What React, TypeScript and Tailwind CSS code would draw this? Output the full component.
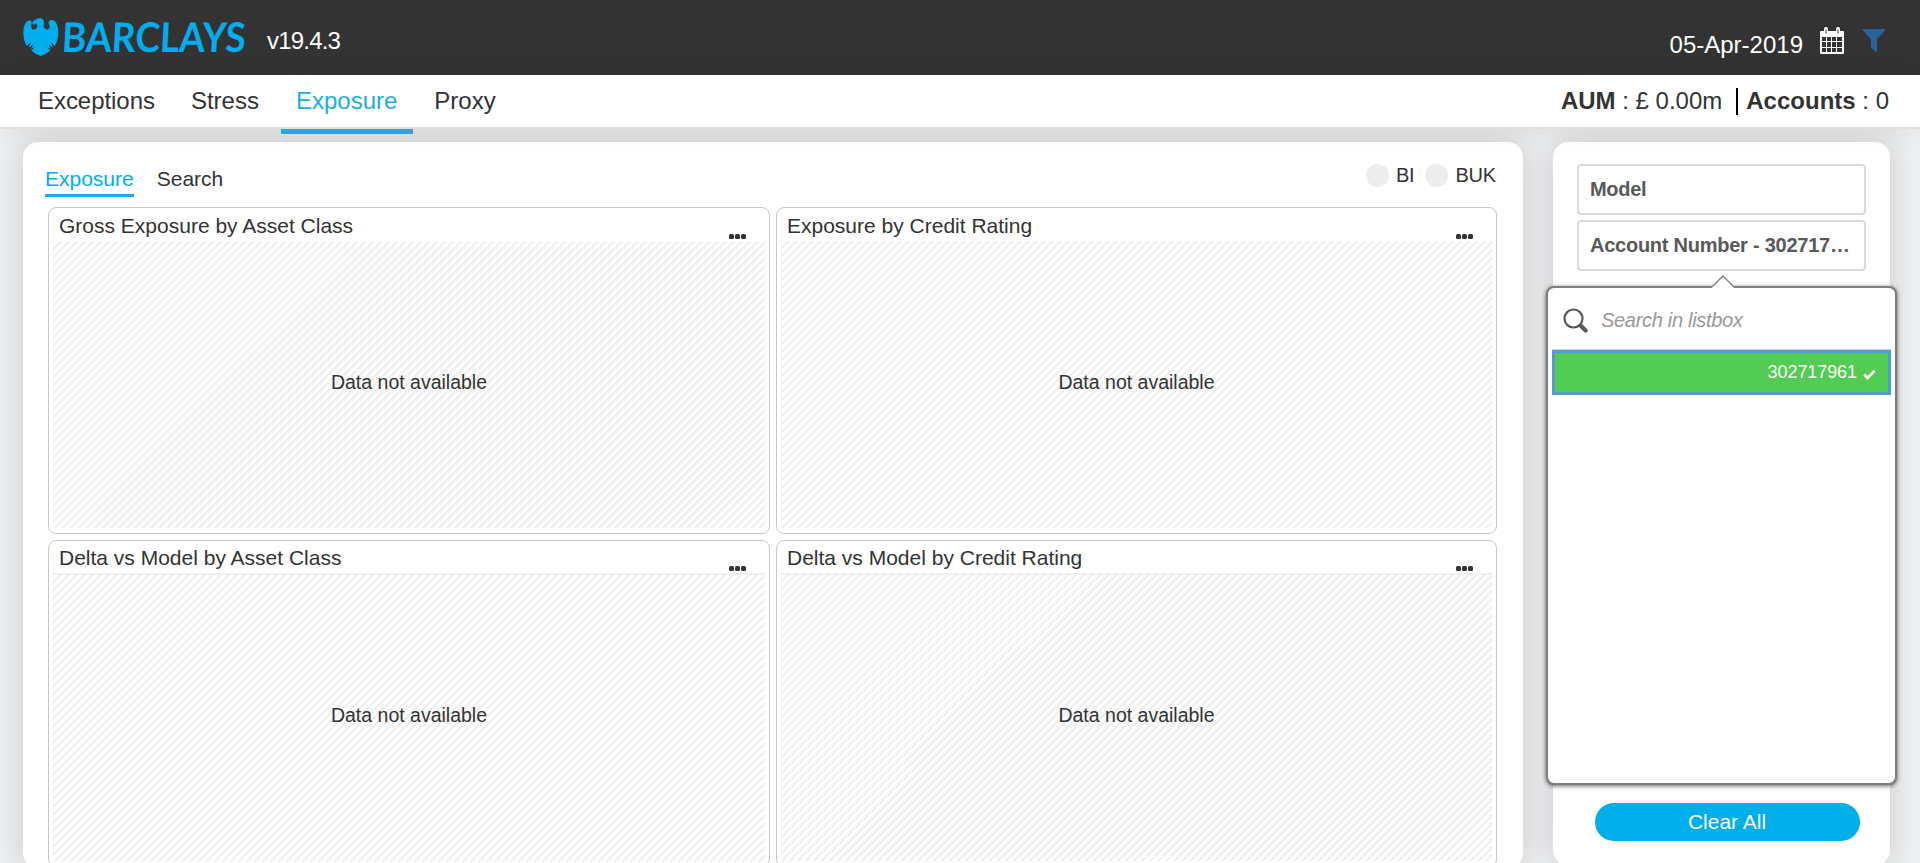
const hatch =
  "bg-[repeating-linear-gradient(-45deg,#fff_0px,#fff_2.500px,#f0f0f0_3.200px,#f0f0f0_5px,#fff_5.660px)]";

function Eagle() {
  return (
    <svg width="36" height="40" viewBox="0 0 36 40" fill="#00aeef" className="shrink-0">
      <path d="M9.500 5Q10.500 3 13 2.500Q14.500 1 17 1Q21 1.500 21 6Q20.300 8 20.800 10Q22 13 25 12.300Q27.500 11 26.300 8.500Q24.500 5 27 3.300Q31.500 2 34 7.500Q35.500 11 35.200 18Q34.500 25 31.500 29.300Q30 27 28 25Q28.500 27.500 30.200 30.500Q27.500 29.500 25.800 27.500Q26.500 30 28 32Q26 31.500 24.300 30Q25.500 32.500 27.300 33.500Q23.500 37 17.800 39Q12 37 8.300 33.500Q10.500 32 11.500 30Q9.500 31.500 7.500 32Q9.500 30 10 27.500Q8 29.500 5.500 30.500Q7.300 27.500 7.800 25Q5.500 27 4 29.300Q1 25 .400 18Q0 11 1.800 7.500Q4 3 7.500 3.500Q8.800 4 8.500 6.500Q7.500 11 9.500 12.300Q12.500 13.300 14 10.500Q15 8.500 13.500 6.800Q12 6 10.500 8Q9 7 9.500 5Z" />
    </svg>
  );
}

function Header() {
  return (
    <header className="flex h-[75px] shrink-0 items-start bg-[#333] pl-[23px] text-white">
      <div className="flex pt-[17px]">
        <Eagle />
        <svg width="190" height="50" viewBox="0 0 190 50" className="overflow-visible">
          <text x="4" y="34.500" textLength="184" lengthAdjust="spacingAndGlyphs" fill="#00aeef" fontFamily="Lato, sans-serif" fontWeight="700" fontSize="41" transform="skewX(-3)">BARCLAYS</text>
        </svg>
      </div>
      <span className="ml-[18px] mt-[23px] text-[24px] leading-[36px] tracking-[-0.800px]">v19.4.3</span>
      <span className="ml-auto mt-[27px] text-[24px] leading-[36px]">05-Apr-2019</span>
      <svg width="24" height="27" viewBox="0 0 24 27" className="ml-[17px] mt-[27px]">
        <path fill="#fff" d="M1 4H4V2a2 2 0 0 1 4 0v2h8V2a2 2 0 0 1 4 0v2h3Q24 4 24 5v21Q24 27 23 27H1Q0 27 0 26V5Q0 4 1 4Z" />
        <path fill="#333" d="M5.500 2.500h1v4h-1zM17.500 2.500h1v4h-1zM2 10h4v4H2zM7 10h4v4H7zM12 10h4v4h-4zM17 10h5v4h-5zM2 15h4v5H2zM7 15h4v5H7zM12 15h4v5h-4zM17 15h5v5h-5zM2 21h4v4H2zM7 21h4v4H7zM12 21h4v4h-4zM17 21h5v4h-5z" />
      </svg>
      <svg width="24" height="24" viewBox="0 0 24 24" className="ml-[18px] mr-[34px] mt-[29px]">
        <path fill="#286399" d="M.5 0h23Q24 1 15 10v13.500L9 19V10Q0 1 .5 0Z" />
      </svg>
    </header>
  );
}

function Nav() {
  return (
    <nav className="relative z-10 flex h-[52px] shrink-0 bg-white pl-[23px] pr-[31px] text-[24px] leading-[52px] shadow-[0_2px_0_#dfdfdf,0_4px_28px_rgba(0,0,0,0.08)]">
      <a className="px-[15px] tracking-[-0.050px]">Exceptions</a>
      <a className="ml-[6px] px-[15px]">Stress</a>
      <a className="ml-[7px] h-[59px] border-b-[5px] border-[#1caee2] pl-[15px] pr-[16px] text-[#1caee2]">Exposure</a>
      <a className="ml-[6px] px-[15px]">Proxy</a>
      <div className="ml-auto flex items-center">
        <span><b>AUM</b> : £ 0.00m</span>
        <span className="ml-[14px] mr-[8px] h-[27px] w-[2px] bg-black" />
        <span><b>Accounts</b> : 0</span>
      </div>
    </nav>
  );
}

function Card({ title, ruled }: { title: string; ruled?: boolean }) {
  return (
    <section className="flex h-[327px] flex-col rounded-[8px] border border-[#c8c8c8] px-[4px] pb-[5px]">
      <div className={`flex shrink-0 justify-between pl-[6px] ${ruled ? "h-[32px]" : "h-[33px]"}`}>
        <h2 className={`text-[21px] ${ruled ? "leading-[34px]" : "leading-[36px]"}`}>{title}</h2>
        <div className={`mr-[19px] flex gap-[1px] ${ruled ? "mt-[25px]" : "mt-[26px]"}`}>
          <i className="size-[5px] rounded-[1.500px] bg-[#333]" />
          <i className="size-[5px] rounded-[1.500px] bg-[#333]" />
          <i className="size-[5px] rounded-[1.500px] bg-[#333]" />
        </div>
      </div>
      <div className={`flex flex-1 items-center justify-center pb-[4px] text-[19.500px] ${hatch} ${ruled ? "border-t-2 border-[#f0f0f0]" : ""}`}>
        Data not available
      </div>
    </section>
  );
}

function Toggle({ label }: { label: string }) {
  return (
    <div className="flex items-center gap-[7px]">
      <i className="size-[23px] rounded-full bg-[#ededed]" />
      <span className="pb-[2px] text-[20px] leading-[22px] tracking-[-0.200px]">{label}</span>
    </div>
  );
}

function Exposure() {
  return (
    <main className="h-[726px] w-[1500px] shrink-0 rounded-[15px] bg-white pl-[22px] pr-[27px] shadow-[0_0_30px_rgba(0,0,0,0.16)]">
      <div className="flex h-[65px] text-[21px]">
        <a className="mt-[23px] h-[32px] border-b-[3px] border-[#1caee2] leading-[27px] text-[#00aeef]">Exposure</a>
        <a className="ml-[23px] mt-[23px] leading-[27px]">Search</a>
        <div className="ml-auto mt-[22px] flex h-[23px] items-center gap-[11px]">
          <Toggle label="BI" />
          <Toggle label="BUK" />
        </div>
      </div>
      <div className="ml-[3px] grid grid-cols-[722px_721px] gap-x-[6px] gap-y-[6px]">
        <Card title="Gross Exposure by Asset Class" />
        <Card title="Exposure by Credit Rating" />
        <Card title="Delta vs Model by Asset Class" ruled />
        <Card title="Delta vs Model by Credit Rating" ruled />
      </div>
    </main>
  );
}

function ListboxPopover() {
  return (
    <div className="absolute left-[-7px] top-[144px] h-[499px] w-[351px] rounded-[8px] border-2 border-[#7d7d7d] bg-white px-[4px] shadow-[0_1px_4px_rgba(0,0,0,0.6)]">
      <svg width="24" height="14" viewBox="0 0 24 14" className="absolute left-[163px] top-[-13px]">
        <path d="M1 12 12 1 23 12V14H1Z" fill="#fff" />
        <path d="M1 12 12 1 23 12" fill="none" stroke="#7d7d7d" strokeWidth="1.300" />
      </svg>
      <div className="flex h-[62px] items-start border-b border-[#d4d4d4]">
        <svg width="26" height="26" viewBox="0 0 26 26" fill="none" stroke="#595959" className="ml-[11px] mt-[20px]">
          <circle cx="10.500" cy="10.500" r="9" strokeWidth="2.200" />
          <path d="m16.500 16.500 2 2" strokeWidth="3.500" />
          <path d="m18 18 4.700 4.500" strokeWidth="4.200" strokeLinecap="round" />
        </svg>
        <span className="ml-[12px] mt-[17px] text-[20px] italic leading-[30px] tracking-[-0.3px] text-[#999]">Search in listbox</span>
      </div>
      <div className="flex h-[45px] items-center justify-end border-[3px] border-[#529dcd] bg-[#52cc52] pr-[12px] text-[18px] text-white">
        <span className="leading-[39px] tracking-[-0.080px]">302717961</span>
        <svg width="13" height="11" viewBox="0 0 13 11" className="ml-[6px] mt-[3px]">
          <path d="m1.300 5.500 3.200 3.500L11.700 1.700" fill="none" stroke="#fff" strokeWidth="2.700" />
        </svg>
      </div>
    </div>
  );
}

function Filters() {
  return (
    <aside className="relative flex h-[723px] w-[337px] shrink-0 flex-col rounded-[15px] bg-white px-[24px] pt-[22px] shadow-[0_0_30px_rgba(0,0,0,0.16)]">
      <div className="flex flex-col gap-[5px] text-[20px] font-bold leading-[46px] text-[#595959]">
        <div className="h-[51px] w-[289px] rounded-[4px] border-2 border-[#d9d9d9] px-[11px] tracking-[-0.300px]">Model</div>
        <div className="h-[51px] w-[289px] whitespace-nowrap rounded-[4px] border-2 border-[#d9d9d9] pl-[11px] tracking-[-0.250px]">Account Number - 302717…</div>
      </div>
      <button className="ml-[18px] mt-[532px] h-[38px] w-[265px] shrink-0 rounded-full bg-[#00aeea] pr-[1px] text-[21px] text-white">Clear All</button>
      <ListboxPopover />
    </aside>
  );
}

export default function App() {
  return (
    <div className="flex h-[863px] w-[1920px] flex-col overflow-hidden bg-[#eeeff1] font-['Liberation_Sans',Arial,sans-serif] text-[#333]">
      <Header />
      <Nav />
      <div className="flex gap-[30px] pl-[23px] pt-[15px]">
        <Exposure />
        <Filters />
      </div>
    </div>
  );
}
